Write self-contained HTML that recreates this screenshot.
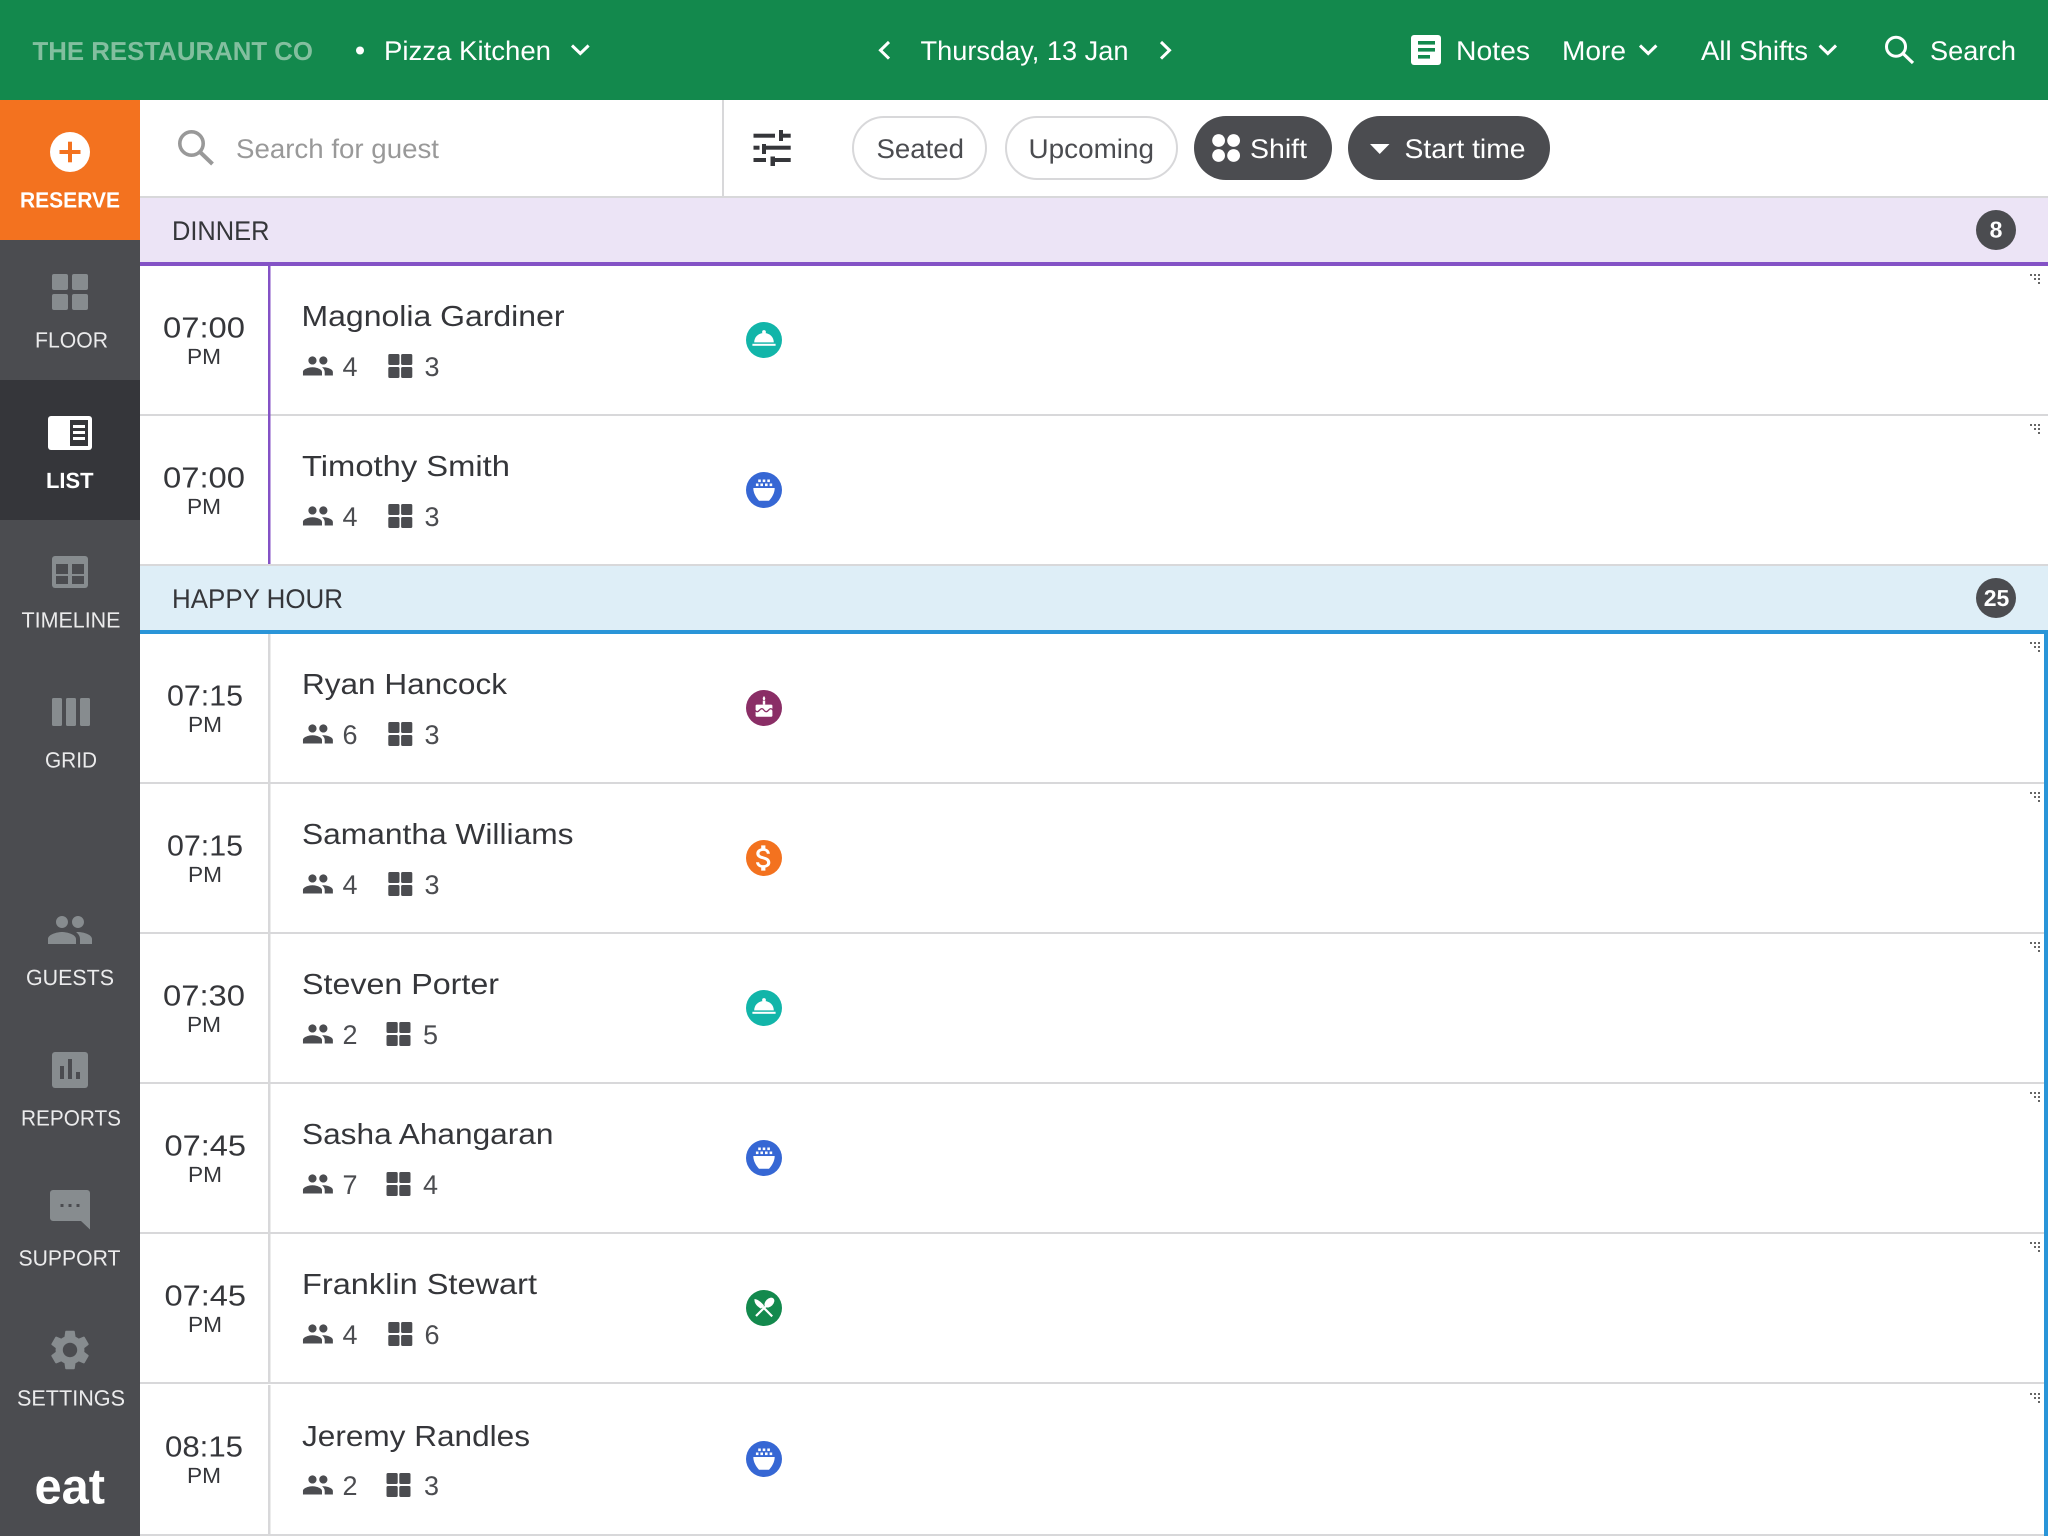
<!DOCTYPE html>
<html lang="en">
<head>
<meta charset="utf-8">
<title>Reservations</title>
<style>
html,body{margin:0;padding:0;background:#fff;width:2048px;height:1536px;overflow:hidden}
svg{display:block}
text{font-family:"Liberation Sans",Arial,sans-serif;text-rendering:geometricPrecision}
.h{font-size:27px;fill:#fff}
.n{font-size:22px;fill:#ebebec}
.t{font-size:29px;fill:#35363a}
.p{font-size:22px;fill:#35363a}
.m{font-size:29px;fill:#35363a}
.d{font-size:27px;fill:#4b4c50}
.s{font-size:27px;fill:#4b4c50}
.g{font-size:27px;fill:#35363a}
</style>
</head>
<body>
<svg xmlns="http://www.w3.org/2000/svg" width="2048" height="1536" viewBox="0 0 2048 1536">
<defs>
<path id="people" d="M16 11c1.66 0 2.99-1.34 2.99-3S17.66 5 16 5c-1.66 0-3 1.34-3 3s1.34 3 3 3zm-8 0c1.66 0 2.99-1.34 2.99-3S9.66 5 8 5C6.34 5 5 6.34 5 8s1.34 3 3 3zm0 2c-2.33 0-7 1.17-7 3.5V19h14v-2.5c0-2.33-4.67-3.5-7-3.5zm8 0c-.29 0-.62.02-.97.05 1.16.84 1.97 1.97 1.97 3.45V19h6v-2.5c0-2.33-4.67-3.5-7-3.5z"/>
<g id="tbl"><rect x="0" y="0" width="11.2" height="11" rx="1.5"/><rect x="12.8" y="0" width="11.2" height="11" rx="1.5"/><rect x="0" y="13" width="11.2" height="11" rx="1.5"/><rect x="12.8" y="13" width="11.2" height="11" rx="1.5"/></g>
<g id="cloche"><circle r="18" fill="#12b5a9"/><g fill="#fff"><circle cx="0" cy="-8" r="1.9"/><path d="M-9.8 2.4C-9.8-3-5.5-7 0-7S9.8-3 9.8 2.4Z"/><rect x="-11.6" y="3.8" width="23.2" height="2"/></g></g>
<g id="bowl"><circle r="18" fill="#3667d4"/><g fill="#fff"><rect x="-5.8" y="-10.5" width="2.6" height="2.6"/><rect x="-1.3" y="-10.5" width="2.6" height="2.6"/><rect x="3.3" y="-10.5" width="2.6" height="2.6"/><rect x="-8.1" y="-6.5" width="2.6" height="2.6"/><rect x="-3.6" y="-6.5" width="2.6" height="2.6"/><rect x="1" y="-6.5" width="2.6" height="2.6"/><rect x="5.6" y="-6.5" width="2.6" height="2.6"/><path d="M-10.7-2H10.7C10.7 3.5 7.5 8 5 10.7H-5C-7.5 8-10.7 3.5-10.7-2Z"/></g></g>
<g id="cake"><circle r="18" fill="#8a2e66"/><g fill="#fff"><path d="M0-12C1.2-10.4 1.4-9.6 1.2-9A1.2 1.2 0 0 1-1.2-9C-1.4-9.6-1.2-10.4 0-12Z"/><rect x="-1.2" y="-7.4" width="2.4" height="4"/><rect x="-8.4" y="-3.4" width="16.8" height="12.2" rx="1.2"/></g><path d="M-9 2.2q2.2 3 4.5 0t4.5 0t4.5 0t4.5 0" fill="none" stroke="#8a2e66" stroke-width="1.3"/></g>
<g id="dollar"><circle r="18" fill="#f3721f"/><path fill="#fff" transform="translate(-16.8,-16.8) scale(1.4)" d="M11.8 10.9c-2.27-.59-3-1.2-3-2.15 0-1.09 1.01-1.85 2.7-1.85 1.78 0 2.44.85 2.5 2.1h2.21c-.07-1.72-1.12-3.3-3.21-3.81V3h-3v2.16c-1.94.42-3.5 1.68-3.5 3.61 0 2.31 1.91 3.46 4.7 4.13 2.5.6 3 1.48 3 2.41 0 .69-.49 1.79-2.7 1.79-2.06 0-2.87-.92-2.98-2.1h-2.2c.12 2.19 1.76 3.42 3.68 3.83V21h3v-2.15c1.95-.37 3.5-1.5 3.5-3.55 0-2.84-2.43-3.81-4.7-4.4z"/></g>
<g id="cutlery"><circle r="18" fill="#13894d"/><g fill="#fff"><ellipse cx="5.4" cy="-5.4" rx="5.8" ry="3.9" transform="rotate(-45 5.4 -5.4)"/><path d="M-9.5-9C-5.5-8.5-2-5 0-2.5L-3 .6C-7-1.5-10-5-9.5-9Z"/></g><path d="M3.5-3.5L-8 8M-2-2L8.2 8.4" stroke="#fff" stroke-width="2.2" fill="none"/></g>
<g id="grip" fill="#666"><rect x="0" y="0" width="2" height="2"/><rect x="4" y="0" width="2" height="2"/><rect x="8" y="0" width="2" height="2"/><rect x="4" y="4" width="2" height="2"/><rect x="8" y="4" width="2" height="2"/><rect x="8" y="8" width="2" height="2"/></g>
</defs>

<!-- Top bar -->
<rect x="0" y="0" width="2048" height="100" fill="#13894d"/>
<text x="32.5" y="60" font-size="26" font-weight="700" fill="#83bf9f" textLength="280.5" lengthAdjust="spacingAndGlyphs">THE RESTAURANT CO</text>
<circle cx="360" cy="50.5" r="4" fill="#fff"/>
<text class="h" x="384" y="60" textLength="167" lengthAdjust="spacingAndGlyphs">Pizza Kitchen</text>
<path d="M572 45.5L580.3 53.5L588.6 45.5" fill="none" stroke="#fff" stroke-width="3"/>
<path d="M889 42L880.5 50.3L889 58.6" fill="none" stroke="#fff" stroke-width="3"/>
<text class="h" x="920.5" y="60" textLength="208" lengthAdjust="spacingAndGlyphs">Thursday, 13 Jan</text>
<path d="M1161 42L1169.5 50.3L1161 58.6" fill="none" stroke="#fff" stroke-width="3"/>
<rect x="1411" y="35" width="30" height="30" rx="3" fill="#fff"/>
<rect x="1418" y="41" width="17" height="3.6" fill="#13894d"/><rect x="1418" y="48" width="17" height="3.6" fill="#13894d"/><rect x="1418" y="55" width="12" height="3.6" fill="#13894d"/>
<text class="h" x="1456" y="60" textLength="74" lengthAdjust="spacingAndGlyphs">Notes</text>
<text class="h" x="1562" y="60" textLength="64" lengthAdjust="spacingAndGlyphs">More</text>
<path d="M1640 45.5L1648.2 53.5L1656.4 45.5" fill="none" stroke="#fff" stroke-width="3"/>
<text class="h" x="1701" y="60" textLength="107" lengthAdjust="spacingAndGlyphs">All Shifts</text>
<path d="M1819.6 45.5L1827.8 53.5L1836 45.5" fill="none" stroke="#fff" stroke-width="3"/>
<circle cx="1896" cy="46.7" r="9.5" fill="none" stroke="#fff" stroke-width="3"/>
<path d="M1903 53.5L1913 63" fill="none" stroke="#fff" stroke-width="3.2"/>
<text class="h" x="1930" y="60" textLength="86" lengthAdjust="spacingAndGlyphs">Search</text>

<!-- Toolbar -->
<rect x="140" y="196" width="1908" height="2" fill="#d8d8da"/>
<rect x="722" y="100" width="2" height="97" fill="#d8d8da"/>
<circle cx="191.5" cy="143.5" r="11.7" fill="none" stroke="#999" stroke-width="3.6"/>
<path d="M200 152L212.5 164" fill="none" stroke="#999" stroke-width="4"/>
<text x="236" y="158" font-size="27" fill="#999" textLength="203" lengthAdjust="spacingAndGlyphs">Search for guest</text>
<g fill="#35363a">
<rect x="753.5" y="133.7" width="21.5" height="4"/><rect x="779" y="130" width="4" height="11"/><rect x="783" y="133.7" width="7.7" height="4"/>
<rect x="753.5" y="145.7" width="6" height="4"/><rect x="762" y="144" width="4" height="10"/><rect x="766" y="145.7" width="24.7" height="4"/>
<rect x="753.5" y="158" width="12.5" height="4"/><rect x="770.5" y="156.5" width="4.5" height="9.5"/><rect x="775" y="158" width="15.7" height="4"/>
</g>
<rect x="853" y="117" width="133" height="62" rx="31" fill="#fff" stroke="#d8d8da" stroke-width="2"/>
<text class="s" x="876.5" y="158" textLength="87.5" lengthAdjust="spacingAndGlyphs">Seated</text>
<rect x="1006" y="117" width="171" height="62" rx="31" fill="#fff" stroke="#d8d8da" stroke-width="2"/>
<text class="s" x="1028.5" y="158" textLength="125.5" lengthAdjust="spacingAndGlyphs">Upcoming</text>
<rect x="1194" y="116" width="138" height="64" rx="32" fill="#4b4c50"/>
<g fill="#fff"><circle cx="1218.6" cy="140.5" r="6.4"/><circle cx="1233.6" cy="140.5" r="6.4"/><circle cx="1218.6" cy="155.5" r="6.4"/><circle cx="1233.6" cy="155.5" r="6.4"/></g>
<text x="1250" y="158" font-size="27" fill="#fff" textLength="57" lengthAdjust="spacingAndGlyphs">Shift</text>
<rect x="1348" y="116" width="202" height="64" rx="32" fill="#4b4c50"/>
<path d="M1370 144H1389.5L1379.7 154Z" fill="#fff"/>
<text x="1404.5" y="158" font-size="27" fill="#fff" textLength="121" lengthAdjust="spacingAndGlyphs">Start time</text>

<!-- Dinner header -->
<rect x="140" y="198" width="1908" height="64" fill="#ece4f6"/>
<rect x="140" y="262" width="1908" height="4" fill="#8452c6"/>
<text class="g" x="172" y="240" textLength="97.5" lengthAdjust="spacingAndGlyphs">DINNER</text>
<circle cx="1996" cy="230" r="20" fill="#4b4c50"/>
<text x="1996" y="237.5" font-size="23" font-weight="700" fill="#fff" text-anchor="middle">8</text>

<!-- Happy hour header -->
<rect x="140" y="566" width="1908" height="64" fill="#deeef7"/>
<rect x="140" y="630" width="1908" height="4" fill="#2a95d8"/>
<text class="g" x="172" y="608" textLength="171" lengthAdjust="spacingAndGlyphs">HAPPY HOUR</text>
<circle cx="1996" cy="598" r="20" fill="#4b4c50"/>
<text x="1996.5" y="606" font-size="23" font-weight="700" fill="#fff" text-anchor="middle">25</text>

<!-- Row 1 -->
<g transform="translate(0,266)">
<rect x="140" y="148" width="1908" height="2" fill="#d8d8da"/>
<rect x="268" y="0" width="2.5" height="150" fill="#8452c6"/>
<text class="t" x="163" y="71.5" textLength="82" lengthAdjust="spacingAndGlyphs">07:00</text>
<text class="p" x="187" y="98" textLength="34" lengthAdjust="spacingAndGlyphs">PM</text>
<text class="m" x="301.5" y="60" textLength="263" lengthAdjust="spacingAndGlyphs">Magnolia Gardiner</text>
<use href="#people" fill="#4b4c50" transform="translate(301.6,83.6) scale(1.36)"/>
<text class="d" x="342.5" y="110">4</text>
<use href="#tbl" fill="#4b4c50" x="388.3" y="88"/>
<text class="d" x="424.5" y="110">3</text>
<use href="#cloche" x="764" y="74"/>
<use href="#grip" x="2030" y="8"/>
</g>
<!-- Row 2 -->
<g transform="translate(0,416)">
<rect x="140" y="148" width="1908" height="2" fill="#d8d8da"/>
<rect x="268" y="0" width="2.5" height="148" fill="#8452c6"/>
<text class="t" x="163" y="71.5" textLength="82" lengthAdjust="spacingAndGlyphs">07:00</text>
<text class="p" x="187" y="98" textLength="34" lengthAdjust="spacingAndGlyphs">PM</text>
<text class="m" x="302" y="60" textLength="208" lengthAdjust="spacingAndGlyphs">Timothy Smith</text>
<use href="#people" fill="#4b4c50" transform="translate(301.6,83.6) scale(1.36)"/>
<text class="d" x="342.5" y="110">4</text>
<use href="#tbl" fill="#4b4c50" x="388.3" y="88"/>
<text class="d" x="424.5" y="110">3</text>
<use href="#bowl" x="764" y="74"/>
<use href="#grip" x="2030" y="8"/>
</g>
<!-- Row 3 -->
<g transform="translate(0,634)">
<rect x="140" y="148" width="1908" height="2" fill="#d8d8da"/>
<rect x="268" y="0" width="2.5" height="150" fill="#d8d8da"/>
<text class="t" x="167" y="71.5" textLength="76" lengthAdjust="spacingAndGlyphs">07:15</text>
<text class="p" x="188" y="98" textLength="34" lengthAdjust="spacingAndGlyphs">PM</text>
<text class="m" x="302" y="60" textLength="205" lengthAdjust="spacingAndGlyphs">Ryan Hancock</text>
<use href="#people" fill="#4b4c50" transform="translate(301.6,83.6) scale(1.36)"/>
<text class="d" x="342.5" y="110">6</text>
<use href="#tbl" fill="#4b4c50" x="388.3" y="88"/>
<text class="d" x="424.5" y="110">3</text>
<use href="#cake" x="764" y="74"/>
<use href="#grip" x="2030" y="8"/>
</g>
<!-- Row 4 -->
<g transform="translate(0,784)">
<rect x="140" y="148" width="1908" height="2" fill="#d8d8da"/>
<rect x="268" y="0" width="2.5" height="150" fill="#d8d8da"/>
<text class="t" x="167" y="71.5" textLength="76" lengthAdjust="spacingAndGlyphs">07:15</text>
<text class="p" x="188" y="98" textLength="34" lengthAdjust="spacingAndGlyphs">PM</text>
<text class="m" x="302" y="60" textLength="271.5" lengthAdjust="spacingAndGlyphs">Samantha Williams</text>
<use href="#people" fill="#4b4c50" transform="translate(301.6,83.6) scale(1.36)"/>
<text class="d" x="342.5" y="110">4</text>
<use href="#tbl" fill="#4b4c50" x="388.3" y="88"/>
<text class="d" x="424.5" y="110">3</text>
<use href="#dollar" x="764" y="74"/>
<use href="#grip" x="2030" y="8"/>
</g>
<!-- Row 5 -->
<g transform="translate(0,934)">
<rect x="140" y="148" width="1908" height="2" fill="#d8d8da"/>
<rect x="268" y="0" width="2.5" height="150" fill="#d8d8da"/>
<text class="t" x="163" y="71.5" textLength="82" lengthAdjust="spacingAndGlyphs">07:30</text>
<text class="p" x="187" y="98" textLength="34" lengthAdjust="spacingAndGlyphs">PM</text>
<text class="m" x="302" y="60" textLength="197" lengthAdjust="spacingAndGlyphs">Steven Porter</text>
<use href="#people" fill="#4b4c50" transform="translate(301.6,83.6) scale(1.36)"/>
<text class="d" x="342.5" y="110">2</text>
<use href="#tbl" fill="#4b4c50" x="386.5" y="88"/>
<text class="d" x="423" y="110">5</text>
<use href="#cloche" x="764" y="74"/>
<use href="#grip" x="2030" y="8"/>
</g>
<!-- Row 6 -->
<g transform="translate(0,1084)">
<rect x="140" y="148" width="1908" height="2" fill="#d8d8da"/>
<rect x="268" y="0" width="2.5" height="150" fill="#d8d8da"/>
<text class="t" x="164.5" y="71.5" textLength="81.5" lengthAdjust="spacingAndGlyphs">07:45</text>
<text class="p" x="188" y="98" textLength="34" lengthAdjust="spacingAndGlyphs">PM</text>
<text class="m" x="302" y="60" textLength="251.5" lengthAdjust="spacingAndGlyphs">Sasha Ahangaran</text>
<use href="#people" fill="#4b4c50" transform="translate(301.6,83.6) scale(1.36)"/>
<text class="d" x="342.5" y="110">7</text>
<use href="#tbl" fill="#4b4c50" x="386.5" y="88"/>
<text class="d" x="423" y="110">4</text>
<use href="#bowl" x="764" y="74"/>
<use href="#grip" x="2030" y="8"/>
</g>
<!-- Row 7 -->
<g transform="translate(0,1234)">
<rect x="140" y="148" width="1908" height="2" fill="#d8d8da"/>
<rect x="268" y="0" width="2.5" height="150" fill="#d8d8da"/>
<text class="t" x="164.5" y="71.5" textLength="81.5" lengthAdjust="spacingAndGlyphs">07:45</text>
<text class="p" x="188" y="98" textLength="34" lengthAdjust="spacingAndGlyphs">PM</text>
<text class="m" x="302" y="60" textLength="235" lengthAdjust="spacingAndGlyphs">Franklin Stewart</text>
<use href="#people" fill="#4b4c50" transform="translate(301.6,83.6) scale(1.36)"/>
<text class="d" x="342.5" y="110">4</text>
<use href="#tbl" fill="#4b4c50" x="388.3" y="88"/>
<text class="d" x="424.5" y="110">6</text>
<use href="#cutlery" x="764" y="74"/>
<use href="#grip" x="2030" y="8"/>
</g>
<!-- Row 8 -->
<g transform="translate(0,1385)">
<rect x="140" y="149" width="1908" height="2" fill="#d8d8da"/>
<rect x="268" y="0" width="2.5" height="151" fill="#d8d8da"/>
<text class="t" x="165" y="71.5" textLength="78" lengthAdjust="spacingAndGlyphs">08:15</text>
<text class="p" x="187" y="98" textLength="34" lengthAdjust="spacingAndGlyphs">PM</text>
<text class="m" x="302" y="61" textLength="228" lengthAdjust="spacingAndGlyphs">Jeremy Randles</text>
<use href="#people" fill="#4b4c50" transform="translate(301.6,83.6) scale(1.36)"/>
<text class="d" x="342.5" y="110">2</text>
<use href="#tbl" fill="#4b4c50" x="386.5" y="88"/>
<text class="d" x="424" y="110">3</text>
<use href="#bowl" x="764" y="74"/>
<use href="#grip" x="2030" y="8"/>
</g>
<rect x="2044" y="634" width="4" height="902" fill="#2a95d8"/>

<!-- Sidebar -->
<rect x="0" y="100" width="140" height="1436" fill="#4b4c50"/>
<rect x="0" y="100" width="140" height="140" fill="#f3721f"/>
<rect x="0" y="380" width="140" height="140" fill="#35363a"/>

<circle cx="70" cy="152" r="20" fill="#fff"/>
<rect x="59.5" y="150" width="21" height="4" fill="#f3721f"/><rect x="68" y="141.7" width="4" height="20.6" fill="#f3721f"/>
<text x="20" y="207.3" font-size="22" font-weight="700" fill="#fff" textLength="100" lengthAdjust="spacingAndGlyphs">RESERVE</text>

<g fill="#878c8f"><rect x="52" y="274" width="16" height="16" rx="2"/><rect x="72" y="274" width="16" height="16" rx="2"/><rect x="52" y="294" width="16" height="16" rx="2"/><rect x="72" y="294" width="16" height="16" rx="2"/></g>
<text class="n" x="35" y="347.5" textLength="73" lengthAdjust="spacingAndGlyphs">FLOOR</text>

<rect x="48" y="416" width="44" height="34" rx="3" fill="#fff"/>
<rect x="70" y="420" width="18" height="26" fill="#35363a"/>
<g fill="#fff"><rect x="73" y="425" width="12" height="3"/><rect x="73" y="431" width="12" height="3"/><rect x="73" y="437" width="12" height="3"/></g>
<text x="46" y="488" font-size="22" font-weight="700" fill="#fff" textLength="47.5" lengthAdjust="spacingAndGlyphs">LIST</text>

<rect x="52" y="556" width="36" height="32" rx="3" fill="#878c8f"/>
<g fill="#4b4c50"><rect x="56" y="564" width="12" height="10"/><rect x="72" y="564" width="12" height="10"/><rect x="56" y="576" width="12" height="8"/><rect x="72" y="576" width="12" height="8"/></g>
<text class="n" x="21.5" y="627.5" textLength="99" lengthAdjust="spacingAndGlyphs">TIMELINE</text>

<g fill="#878c8f"><rect x="52" y="698" width="10" height="28" rx="1.5"/><rect x="66" y="698" width="10" height="28" rx="1.5"/><rect x="80" y="698" width="10" height="28" rx="1.5"/></g>
<text class="n" x="45" y="767.5" textLength="52" lengthAdjust="spacingAndGlyphs">GRID</text>

<use href="#people" fill="#878c8f" transform="translate(46,906) scale(2)"/>
<text class="n" x="26" y="985" textLength="88" lengthAdjust="spacingAndGlyphs">GUESTS</text>

<rect x="52" y="1052" width="36" height="36" rx="3" fill="#878c8f"/>
<g fill="#4b4c50"><rect x="60" y="1066" width="4" height="13"/><rect x="68" y="1059" width="4" height="20"/><rect x="76" y="1072" width="4" height="7"/></g>
<text class="n" x="21" y="1125.5" textLength="100" lengthAdjust="spacingAndGlyphs">REPORTS</text>

<path d="M53 1190H87a3 3 0 0 1 3 3V1229.5L81 1221H53a3 3 0 0 1-3-3V1193a3 3 0 0 1 3-3Z" fill="#878c8f"/>
<g fill="#4b4c50"><rect x="60.5" y="1204" width="3" height="3"/><rect x="68.5" y="1204" width="3" height="3"/><rect x="76.5" y="1204" width="3" height="3"/></g>
<text class="n" x="18.5" y="1265.5" textLength="102" lengthAdjust="spacingAndGlyphs">SUPPORT</text>

<path fill="#878c8f" transform="translate(46,1326) scale(2)" d="M19.14 12.94c.04-.3.06-.61.06-.94 0-.32-.02-.64-.07-.94l2.03-1.58c.18-.14.23-.41.12-.61l-1.92-3.32c-.12-.22-.37-.29-.59-.22l-2.39.96c-.5-.38-1.03-.7-1.62-.94l-.36-2.54c-.04-.24-.24-.41-.48-.41h-3.84c-.24 0-.43.17-.47.41l-.36 2.54c-.59.24-1.13.57-1.62.94l-2.39-.96c-.22-.08-.47 0-.59.22L2.74 8.87c-.12.21-.08.47.12.61l2.03 1.58c-.05.3-.09.63-.09.94s.02.64.07.94l-2.03 1.58c-.18.14-.23.41-.12.61l1.92 3.32c.12.22.37.29.59.22l2.39-.96c.5.38 1.03.7 1.62.94l.36 2.54c.05.24.24.41.48.41h3.84c.24 0 .44-.17.47-.41l.36-2.54c.59-.24 1.13-.56 1.62-.94l2.39.96c.22.08.47 0 .59-.22l1.92-3.32c.12-.22.07-.47-.12-.61l-2.01-1.58zM12 15.6c-1.98 0-3.6-1.62-3.6-3.6s1.62-3.6 3.6-3.6 3.6 1.62 3.6 3.6-1.62 3.6-3.6 3.6z"/>
<text class="n" x="17" y="1405.5" textLength="108" lengthAdjust="spacingAndGlyphs">SETTINGS</text>

<text x="34.5" y="1503.5" font-size="50" font-weight="700" fill="#fff" textLength="70.5" lengthAdjust="spacingAndGlyphs">eat</text>
</svg>
</body>
</html>
